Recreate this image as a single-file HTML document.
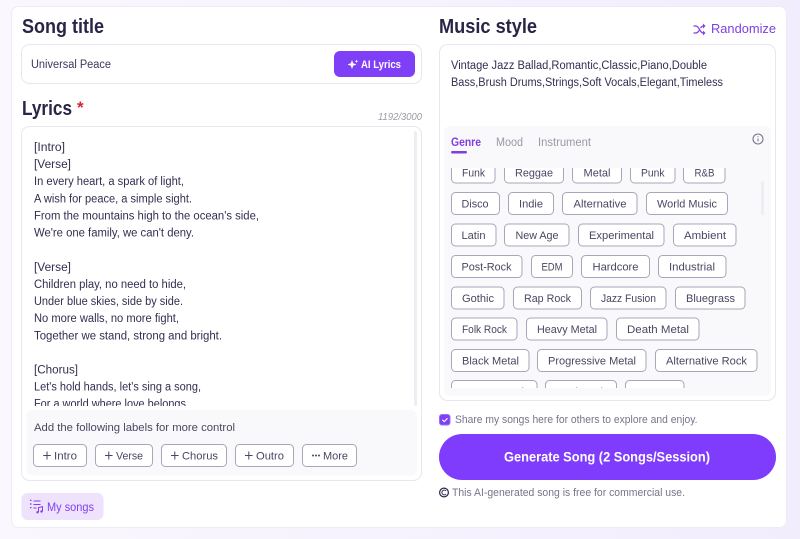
<!DOCTYPE html>
<html><head><meta charset="utf-8"><title>Song</title>
<style>
html,body{margin:0;padding:0;width:800px;height:539px;overflow:hidden;background:#f3effd}
svg{display:block;filter:blur(.35px)}
text{font-family:"Liberation Sans",sans-serif;white-space:pre}
.h{font-size:20px;font-weight:700;fill:#2a2447}
.l{font-size:11.5px;fill:#332e50}
.t{font-size:11.2px;fill:#4a4663}
.r{fill:#fff;stroke:#a9a6ba;stroke-width:1}
.g{font-size:11px;fill:#77748a}
</style></head><body>
<svg width="800" height="539" viewBox="0 0 800 539" xmlns="http://www.w3.org/2000/svg">
<defs>
<linearGradient id="bg" x1="0" x2="1" y1="0" y2="0"><stop offset="0" stop-color="#fbf7fe"/><stop offset="1" stop-color="#f1edfd"/></linearGradient>
<clipPath id="lc"><rect x="22" y="127" width="392" height="279"/></clipPath>
<clipPath id="tc"><rect x="444" y="168" width="327" height="220"/></clipPath>
</defs>
<rect width="800" height="539" fill="url(#bg)"/>
<rect x="11.5" y="6.5" width="775" height="521" rx="7" fill="#fff" stroke="#eeeaf6"/>

<text class="h" x="22" y="33" textLength="82" lengthAdjust="spacingAndGlyphs">Song title</text>
<rect x="21.5" y="44.5" width="400" height="39" rx="8" fill="#fff" stroke="#e8e6ee"/>
<text class="l" x="31" y="68" textLength="80" lengthAdjust="spacingAndGlyphs" style="fill:#3d3859">Universal Peace</text>
<rect x="334" y="51" width="81" height="26" rx="6" fill="#7f3ff6"/>
<path d="M352 60l1.200 3.300 3.300 1.200-3.300 1.200-1.200 3.300-1.200-3.300-3.300-1.200 3.300-1.200zM356.500 59.500l.5 1.300 1.300.5-1.300.5-.5 1.300-.5-1.300-1.300-.5 1.300-.5z" fill="#fff"/>
<text x="361" y="68" font-size="11" font-weight="700" fill="#fff" textLength="40" lengthAdjust="spacingAndGlyphs">AI Lyrics</text>

<text class="h" x="22" y="115" textLength="50" lengthAdjust="spacingAndGlyphs">Lyrics</text>
<text x="77" y="113" font-size="17" font-weight="700" fill="#d9232e">*</text>
<text x="378" y="120" font-size="10.5" font-style="italic" fill="#9c9aa6" textLength="44" lengthAdjust="spacingAndGlyphs">1192/3000</text>
<rect x="21.5" y="126.5" width="400" height="354" rx="8" fill="#fff" stroke="#e8e6ee"/>
<rect x="414" y="131" width="3" height="275" rx="1.5" fill="#eceef4"/>
<g clip-path="url(#lc)">
<text class="l" x="34" y="151" textLength="31" lengthAdjust="spacingAndGlyphs">[Intro]</text>
<text class="l" x="34" y="168" textLength="37" lengthAdjust="spacingAndGlyphs">[Verse]</text>
<text class="l" x="34" y="185" textLength="150" lengthAdjust="spacingAndGlyphs">In every heart, a spark of light,</text>
<text class="l" x="34" y="202.500" textLength="158" lengthAdjust="spacingAndGlyphs">A wish for peace, a simple sight.</text>
<text class="l" x="34" y="219.500" textLength="225" lengthAdjust="spacingAndGlyphs">From the mountains high to the ocean's side,</text>
<text class="l" x="34" y="236.500" textLength="160" lengthAdjust="spacingAndGlyphs">We're one family, we can't deny.</text>
<text class="l" x="34" y="271" textLength="37" lengthAdjust="spacingAndGlyphs">[Verse]</text>
<text class="l" x="34" y="288" textLength="152" lengthAdjust="spacingAndGlyphs">Children play, no need to hide,</text>
<text class="l" x="34" y="305" textLength="149" lengthAdjust="spacingAndGlyphs">Under blue skies, side by side.</text>
<text class="l" x="34" y="322" textLength="145" lengthAdjust="spacingAndGlyphs">No more walls, no more fight,</text>
<text class="l" x="34" y="339.500" textLength="188" lengthAdjust="spacingAndGlyphs">Together we stand, strong and bright.</text>
<text class="l" x="34" y="373.500" textLength="44" lengthAdjust="spacingAndGlyphs">[Chorus]</text>
<text class="l" x="34" y="390.500" textLength="167" lengthAdjust="spacingAndGlyphs">Let's hold hands, let's sing a song,</text>
<text class="l" x="34" y="407.500" textLength="155" lengthAdjust="spacingAndGlyphs">For a world where love belongs.</text>
</g>
<rect x="26.500" y="410" width="390.500" height="65.500" rx="6" fill="#f9f9fb"/>
<text class="t" x="34" y="431" textLength="201" lengthAdjust="spacingAndGlyphs">Add the following labels for more control</text>
<rect class="r" x="33.500" y="444.500" width="53" height="22" rx="4"/>
<rect class="r" x="95.500" y="444.500" width="57" height="22" rx="4"/>
<rect class="r" x="161.500" y="444.500" width="65" height="22" rx="4"/>
<rect class="r" x="235.500" y="444.500" width="58" height="22" rx="4"/>
<rect class="r" x="302.500" y="444.500" width="54" height="22" rx="4"/>
<path d="M47 451.500v8M43.200 455.500h7.600M108.800 451.500v8M105 455.500h7.600M174.800 451.500v8M171 455.500h7.600M248.800 451.500v8M245 455.500h7.600" stroke="#4a4663" stroke-width="1" fill="none"/>
<circle cx="313" cy="455.500" r="1" fill="#4a4663"/><circle cx="316" cy="455.500" r="1" fill="#4a4663"/><circle cx="319" cy="455.500" r="1" fill="#4a4663"/>
<text class="t" x="54" y="459.500" textLength="23" lengthAdjust="spacingAndGlyphs">Intro</text>
<text class="t" x="116" y="459.500" textLength="27" lengthAdjust="spacingAndGlyphs">Verse</text>
<text class="t" x="182" y="459.500" textLength="36" lengthAdjust="spacingAndGlyphs">Chorus</text>
<text class="t" x="256" y="459.500" textLength="28" lengthAdjust="spacingAndGlyphs">Outro</text>
<text class="t" x="323" y="459.500" textLength="25" lengthAdjust="spacingAndGlyphs">More</text>

<rect x="21.500" y="493" width="82" height="27" rx="6" fill="#eee2fd"/>
<path d="M33.500 501h7M33.500 504.500h7M33.500 508h3" stroke="#7f3ff0" stroke-width="1.100" fill="none"/>
<path d="M30 500.400h1.500M30 504h1.500M30 507.600h1.500" stroke="#7f3ff0" stroke-width="1.300" fill="none"/>
<path d="M38.500 512v-4.300l4-1v4.500" stroke="#7f3ff0" stroke-width="1" fill="none"/><circle cx="37.500" cy="512.300" r="1.200" fill="#7f3ff0"/><circle cx="41.500" cy="511.500" r="1.200" fill="#7f3ff0"/>
<text x="47" y="511" font-size="11.500" fill="#7f3ff0" textLength="47" lengthAdjust="spacingAndGlyphs">My songs</text>

<text class="h" x="439" y="33" textLength="98" lengthAdjust="spacingAndGlyphs">Music style</text>
<path d="M693.500 26h2.500c3 0 4 7 7 7h1.500M693.500 33h2.500c1.300 0 2.200-1.200 3-2.500M700.500 28c.8-1.200 1.500-2 3-2h1" stroke="#7f3fe6" stroke-width="1.300" fill="none"/>
<path d="M703 23.500l2.500 2.500-2.500 2.500zM703 30.500l2.500 2.500-2.500 2.500z" fill="#7f3fe6"/>
<text x="711" y="33" font-size="12.500" fill="#7f3fe0" textLength="65" lengthAdjust="spacingAndGlyphs">Randomize</text>
<rect x="439.500" y="44.500" width="336" height="356" rx="8" fill="#fff" stroke="#e8e6ee"/>
<text class="l" x="451" y="69" textLength="256" lengthAdjust="spacingAndGlyphs">Vintage Jazz Ballad,Romantic,Classic,Piano,Double</text>
<text class="l" x="451" y="86" textLength="272" lengthAdjust="spacingAndGlyphs">Bass,Brush Drums,Strings,Soft Vocals,Elegant,Timeless</text>
<rect x="444" y="126" width="327" height="270" rx="6" fill="#f9f9fb"/>
<text x="451" y="146" font-size="11.500" font-weight="700" fill="#7f3fe0" textLength="30" lengthAdjust="spacingAndGlyphs">Genre</text>
<text x="496" y="146" font-size="11.500" fill="#9a98a8" textLength="27" lengthAdjust="spacingAndGlyphs">Mood</text>
<text x="538" y="146" font-size="11.500" fill="#9a98a8" textLength="53" lengthAdjust="spacingAndGlyphs">Instrument</text>
<rect x="451" y="151" width="16" height="2.500" rx="1.200" fill="#7f3fe0"/>
<circle cx="758" cy="139" r="5" fill="none" stroke="#77748a" stroke-width="1.100"/>
<path d="M758 138.500v3M758 136.300v1" stroke="#77748a" stroke-width="1"/>
<rect x="761" y="181" width="3" height="34" rx="1.500" fill="#eceef4"/>
<g clip-path="url(#tc)">
<rect class="r" x="451.500" y="161.500" width="43.500" height="21.500" rx="4"/><text class="t" x="462" y="176.500" textLength="23" lengthAdjust="spacingAndGlyphs">Funk</text>
<rect class="r" x="504.500" y="161.500" width="59" height="21.500" rx="4"/><text class="t" x="515" y="176.500" textLength="38" lengthAdjust="spacingAndGlyphs">Reggae</text>
<rect class="r" x="572.500" y="161.500" width="49" height="21.500" rx="4"/><text class="t" x="583.500" y="176.500" textLength="27" lengthAdjust="spacingAndGlyphs">Metal</text>
<rect class="r" x="630.500" y="161.500" width="44.500" height="21.500" rx="4"/><text class="t" x="641" y="176.500" textLength="23.500" lengthAdjust="spacingAndGlyphs">Punk</text>
<rect class="r" x="683.500" y="161.500" width="41.500" height="21.500" rx="4"/><text class="t" x="694.500" y="176.500" textLength="20" lengthAdjust="spacingAndGlyphs">R&amp;B</text>

<rect class="r" x="451.500" y="192.500" width="48" height="22" rx="4"/><text class="t" x="461.500" y="207.300" textLength="27" lengthAdjust="spacingAndGlyphs">Disco</text>
<rect class="r" x="508.500" y="192.500" width="45" height="22" rx="4"/><text class="t" x="519" y="207.300" textLength="24" lengthAdjust="spacingAndGlyphs">Indie</text>
<rect class="r" x="562.500" y="192.500" width="74.500" height="22" rx="4"/><text class="t" x="573.500" y="207.300" textLength="53" lengthAdjust="spacingAndGlyphs">Alternative</text>
<rect class="r" x="646.500" y="192.500" width="81" height="22" rx="4"/><text class="t" x="657" y="207.300" textLength="60" lengthAdjust="spacingAndGlyphs">World Music</text>

<rect class="r" x="451.500" y="224" width="44.500" height="22" rx="4"/><text class="t" x="461.500" y="238.800" textLength="24" lengthAdjust="spacingAndGlyphs">Latin</text>
<rect class="r" x="504.500" y="224" width="64.500" height="22" rx="4"/><text class="t" x="515.500" y="238.800" textLength="43" lengthAdjust="spacingAndGlyphs">New Age</text>
<rect class="r" x="578.500" y="224" width="85.500" height="22" rx="4"/><text class="t" x="589" y="238.800" textLength="65" lengthAdjust="spacingAndGlyphs">Experimental</text>
<rect class="r" x="673.500" y="224" width="62.500" height="22" rx="4"/><text class="t" x="684" y="238.800" textLength="42" lengthAdjust="spacingAndGlyphs">Ambient</text>

<rect class="r" x="451.500" y="255.500" width="70.500" height="22" rx="4"/><text class="t" x="461.500" y="270.300" textLength="50" lengthAdjust="spacingAndGlyphs">Post-Rock</text>
<rect class="r" x="531.500" y="255.500" width="41" height="22" rx="4"/><text class="t" x="541.500" y="270.300" textLength="21" lengthAdjust="spacingAndGlyphs">EDM</text>
<rect class="r" x="581.500" y="255.500" width="68" height="22" rx="4"/><text class="t" x="592.500" y="270.300" textLength="46" lengthAdjust="spacingAndGlyphs">Hardcore</text>
<rect class="r" x="658.500" y="255.500" width="67.500" height="22" rx="4"/><text class="t" x="669" y="270.300" textLength="46" lengthAdjust="spacingAndGlyphs">Industrial</text>

<rect class="r" x="451.500" y="287" width="52.500" height="22" rx="4"/><text class="t" x="462" y="301.800" textLength="32" lengthAdjust="spacingAndGlyphs">Gothic</text>
<rect class="r" x="513.500" y="287" width="68" height="22" rx="4"/><text class="t" x="524" y="301.800" textLength="47" lengthAdjust="spacingAndGlyphs">Rap Rock</text>
<rect class="r" x="590.500" y="287" width="75.500" height="22" rx="4"/><text class="t" x="601" y="301.800" textLength="55" lengthAdjust="spacingAndGlyphs">Jazz Fusion</text>
<rect class="r" x="675.500" y="287" width="69.500" height="22" rx="4"/><text class="t" x="686" y="301.800" textLength="49" lengthAdjust="spacingAndGlyphs">Bluegrass</text>

<rect class="r" x="451.500" y="318" width="65.500" height="22" rx="4"/><text class="t" x="462" y="332.800" textLength="45" lengthAdjust="spacingAndGlyphs">Folk Rock</text>
<rect class="r" x="526.500" y="318" width="80.500" height="22" rx="4"/><text class="t" x="537" y="332.800" textLength="60" lengthAdjust="spacingAndGlyphs">Heavy Metal</text>
<rect class="r" x="616.500" y="318" width="82.500" height="22" rx="4"/><text class="t" x="627" y="332.800" textLength="62" lengthAdjust="spacingAndGlyphs">Death Metal</text>

<rect class="r" x="451.500" y="349.500" width="77.500" height="22" rx="4"/><text class="t" x="462" y="364.300" textLength="57" lengthAdjust="spacingAndGlyphs">Black Metal</text>
<rect class="r" x="537.500" y="349.500" width="108.500" height="22" rx="4"/><text class="t" x="548" y="364.300" textLength="88" lengthAdjust="spacingAndGlyphs">Progressive Metal</text>
<rect class="r" x="655.500" y="349.500" width="101.500" height="22" rx="4"/><text class="t" x="666" y="364.300" textLength="81" lengthAdjust="spacingAndGlyphs">Alternative Rock</text>

<rect class="r" x="451.500" y="380.500" width="85.500" height="22" rx="4"/><text class="t" x="462" y="395.300" textLength="65" lengthAdjust="spacingAndGlyphs">Garage Rock</text>
<rect class="r" x="545.500" y="380.500" width="71" height="22" rx="4"/><text class="t" x="556" y="395.300" textLength="50" lengthAdjust="spacingAndGlyphs">Soul Rock</text>
<rect class="r" x="625.500" y="380.500" width="58.500" height="22" rx="4"/><text class="t" x="636" y="395.300" textLength="38" lengthAdjust="spacingAndGlyphs">Grunge</text>
</g>

<rect x="439.500" y="414.500" width="10.500" height="10.500" rx="2.500" fill="#7f3ff6" stroke="#9a6ff7"/>
<path d="M442.300 419.800l1.900 1.800 3.300-3.300" stroke="#fff" stroke-width="1.100" fill="none"/>
<text class="g" x="455" y="423" textLength="242.500" lengthAdjust="spacingAndGlyphs">Share my songs here for others to explore and enjoy.</text>
<rect x="439" y="434" width="337" height="46" rx="23" fill="#7f3cfc"/>
<text x="504" y="461.500" font-size="14" font-weight="700" fill="#fff" textLength="206" lengthAdjust="spacingAndGlyphs">Generate Song (2 Songs/Session)</text>
<circle cx="444" cy="492.500" r="4.400" fill="none" stroke="#2a2447" stroke-width="1.200"/>
<path d="M446 490.800a2.400 2.400 0 1 0 0 3.400" fill="none" stroke="#2a2447" stroke-width="1"/>
<text class="g" x="452" y="496" textLength="233" lengthAdjust="spacingAndGlyphs">This AI-generated song is free for commercial use.</text>
</svg>
</body></html>
